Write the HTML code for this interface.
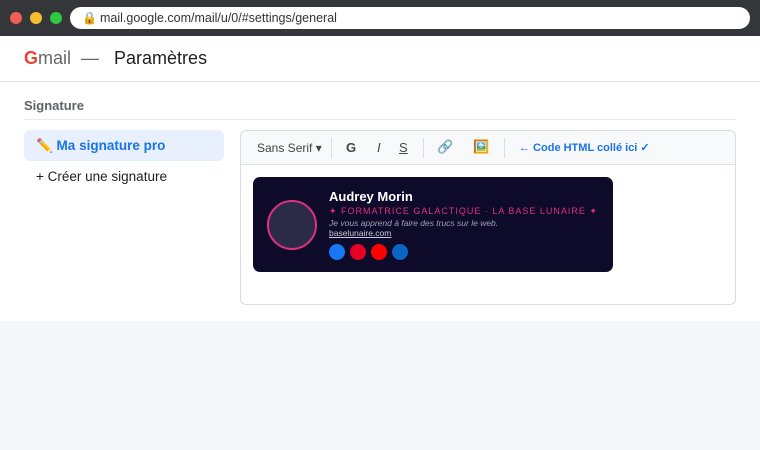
<!DOCTYPE html><html><head><meta charset="utf-8"><style>
*{margin:0;padding:0;box-sizing:border-box}
body{width:760px;height:450px;font-family:"Liberation Sans",sans-serif;background:#f5f6fa;position:relative;overflow:hidden}
.bar{position:absolute;left:0;top:0;width:760px;height:36px;background:#35363a}
.dot{position:absolute;top:12px;width:12px;height:12px;border-radius:50%}
.url{position:absolute;left:70px;top:7px;width:680px;height:22px;background:#fff;border-radius:11px;font-size:12.5px;color:#333;line-height:22px;padding-left:30px}
.main{position:absolute;left:0;top:36px;width:760px;height:285px;background:#fff}
.a{position:absolute}
</style></head><body>
<div class="bar"><div class="dot" style="left:10px;background:#ed5f56"></div><div class="dot" style="left:30px;background:#f6bd2e"></div><div class="dot" style="left:50px;background:#2fc842"></div>
<div class="url"><span style="position:absolute;left:12px;top:0;font-size:12px">🔒</span>mail.google.com/mail/u/0/#settings/general</div></div>
<div class="main">
<div class="a" style="left:24px;top:12px;font-size:18px;color:#666;white-space:nowrap"><span style="color:#ea4335;font-weight:bold">G</span>mail &nbsp;— &nbsp; <span style="color:#202124">Paramètres</span></div>
<div class="a" style="left:0;top:45px;width:760px;height:1px;background:#e0e0e0"></div>
<div class="a" style="left:24px;top:62px;font-size:13px;font-weight:bold;color:#5f6368">Signature</div>
<div class="a" style="left:24px;top:83px;width:712px;height:1px;background:#e8e8e8"></div>
<div class="a" style="left:24px;top:94px;width:200px;height:31px;background:#e8f0fe;border-radius:6px;font-size:13.5px;font-weight:bold;color:#1a73e8;line-height:31px;padding-left:12px">✏️ Ma signature pro</div>
<div class="a" style="left:36px;top:133px;font-size:13.5px;color:#202124">+ Créer une signature</div>
<div class="a" style="left:240px;top:94px;width:496px;height:175px;border:1px solid #dadce0;border-radius:6px;overflow:hidden">
<div style="height:34px;background:#f8f9fa;border-bottom:1px solid #e0e0e0;position:relative;font-size:12px;color:#444">
<span class="a" style="left:16px;top:10px">Sans Serif ▾</span>
<span class="a" style="left:90px;top:7px;width:1px;height:20px;background:#ddd"></span>
<span class="a" style="left:105px;top:9px;font-weight:bold;font-size:13px">G</span>
<span class="a" style="left:136px;top:9px;font-style:italic;font-size:13px">I</span>
<span class="a" style="left:158px;top:9px;text-decoration:underline;font-size:13px">S</span>
<span class="a" style="left:182px;top:7px;width:1px;height:20px;background:#ddd"></span>
<span class="a" style="left:196px;top:8px;font-size:13px">🔗</span>
<span class="a" style="left:232px;top:8px;font-size:13px">🖼️</span>
<span class="a" style="left:263px;top:7px;width:1px;height:20px;background:#ddd"></span>
<span class="a" style="left:278px;top:10px;color:#1a73e8;font-weight:bold;font-size:11px">← Code HTML collé ici ✓</span>
</div>
<div class="a" style="left:12px;top:46px;width:360px;height:95px;background:#0d0b29;border-radius:7px">
<div class="a" style="left:14px;top:23px;width:50px;height:50px;border-radius:50%;border:2px solid #e0307f;background:#2b2a47"></div>
<div class="a" style="left:76px;top:12px;font-size:13px;font-weight:bold;color:#fff">Audrey Morin</div>
<div class="a" style="left:76px;top:29px;font-size:9px;color:#e0307f;letter-spacing:1px;white-space:nowrap">✦ FORMATRICE GALACTIQUE · LA BASE LUNAIRE ✦</div>
<div class="a" style="left:76px;top:41px;font-size:8.5px;color:#a0a0b8;font-style:italic">Je vous apprend à faire des trucs sur le web.</div>
<div class="a" style="left:76px;top:51px;font-size:8.5px;color:#c8c8d8;text-decoration:underline">baselunaire.com</div>
<div class="a" style="left:76px;top:67px;width:16px;height:16px;border-radius:50%;background:#1877f2"></div>
<div class="a" style="left:97px;top:67px;width:16px;height:16px;border-radius:50%;background:#e60023"></div>
<div class="a" style="left:118px;top:67px;width:16px;height:16px;border-radius:50%;background:#ff0000"></div>
<div class="a" style="left:139px;top:67px;width:16px;height:16px;border-radius:50%;background:#0a66c2"></div>
</div>
</div>
</div>
</body></html>
